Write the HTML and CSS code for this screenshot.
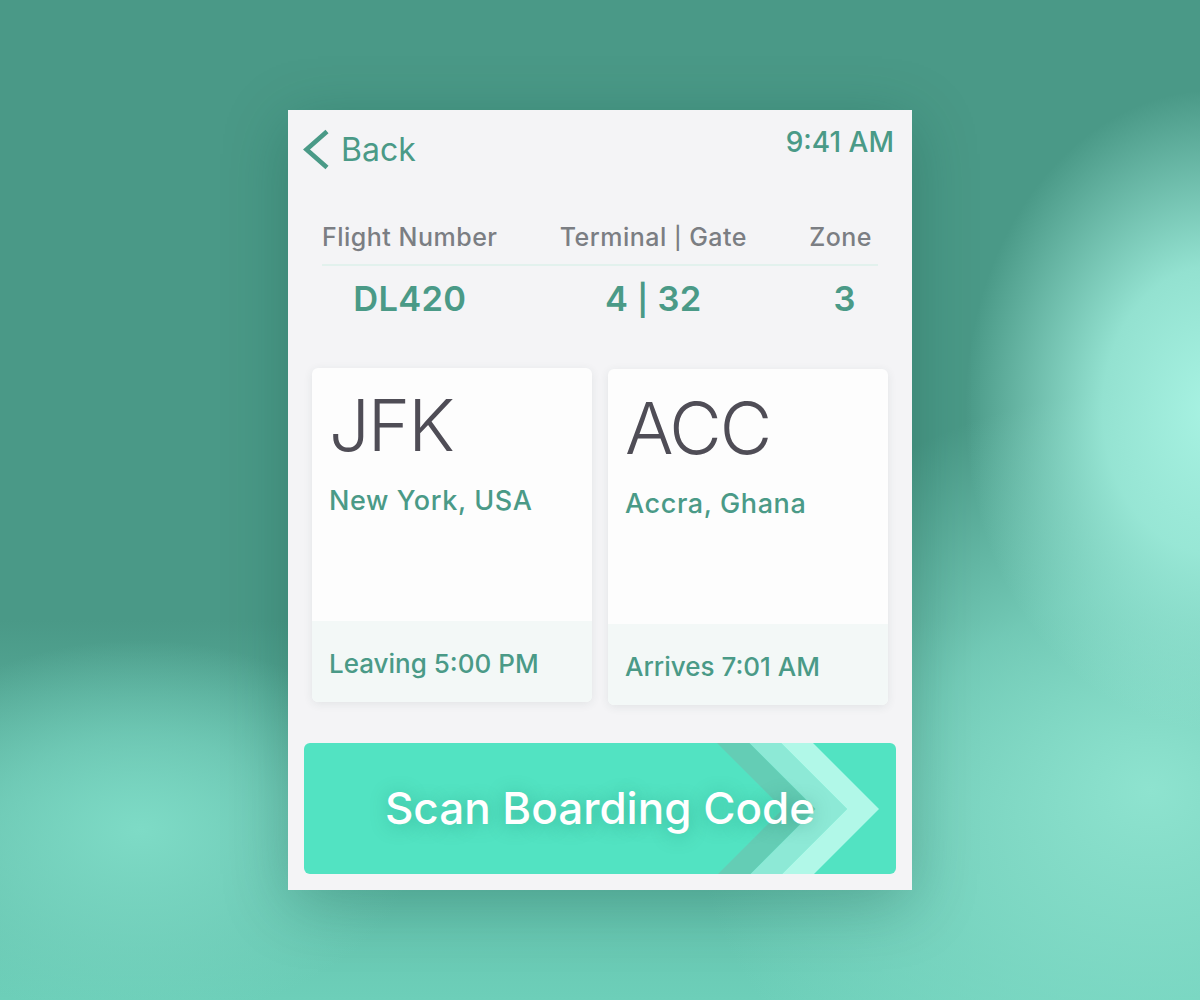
FILE: index.html
```html
<!DOCTYPE html>
<html lang="en">
<head>
<meta charset="utf-8">
<title>Boarding Pass</title>
<link rel="stylesheet" href="styles.css">
</head>
<body>
  <main class="screen">
    <header class="topbar">
      <a class="back" href="#">
        <svg class="back__icon" width="28" height="44" viewBox="0 0 28 44" aria-hidden="true">
          <path d="M24 3.5 L3.5 21.5 L24 39.5" fill="none" stroke="#4a9a87" stroke-width="4.6"/>
        </svg>
        <span class="back__label">Back</span>
      </a>
      <span class="clock">9:41 AM</span>
    </header>

    <section class="flight">
      <div class="flight__col">
        <span class="flight__label">Flight Number</span>
        <span class="flight__value">DL420</span>
      </div>
      <div class="flight__col">
        <span class="flight__label">Terminal <span class="sep">|</span> Gate</span>
        <span class="flight__value">4 <span class="sep">|</span> 32</span>
      </div>
      <div class="flight__col flight__col--zone">
        <span class="flight__label">Zone</span>
        <span class="flight__value">3</span>
      </div>
    </section>

    <section class="route">
      <article class="card">
        <div class="card__main">
          <div class="card__code">JFK</div>
          <div class="card__city">New York, USA</div>
        </div>
        <div class="card__foot">Leaving 5:00 PM</div>
      </article>
      <article class="card card--alt">
        <div class="card__main">
          <div class="card__code">ACC</div>
          <div class="card__city">Accra, Ghana</div>
        </div>
        <div class="card__foot">Arrives 7:01 AM</div>
      </article>
    </section>

    <button class="scan" type="button">
      <svg class="scan__arrows" width="200" height="132" viewBox="0 0 200 132" aria-hidden="true">
        <polygon points="21,0 53.5,0 119.5,66 53.5,132 21,132 87,66" fill="#64cdb5"/>
        <polygon points="53.5,0 85,0 151,66 85,132 53.5,132 119.5,66" fill="#8de9d6"/>
        <polygon points="85,0 117,0 183,66 117,132 85,132 151,66" fill="#b1f8e8"/>
      </svg>
      <span class="scan__label">Scan Boarding Code</span>
    </button>
  </main>
</body>
</html>
```

FILE: styles.css
```css
* {
  box-sizing: border-box;
}

html, body {
  margin: 0;
  padding: 0;
}

body {
  width: 1200px;
  height: 1000px;
  display: flex;
  align-items: center;
  justify-content: center;
  font-family: Inter, Roboto, "Liberation Sans", sans-serif;
  overflow: hidden;
  background:
    radial-gradient(ellipse 250px 320px at 1215px 410px, rgba(168, 243, 227, 1) 0%, rgba(160, 238, 221, 0.85) 45%, rgba(160, 238, 221, 0) 100%),
    radial-gradient(ellipse 460px 400px at 1150px 790px, rgba(142, 227, 207, 1) 0%, rgba(130, 220, 200, 0.7) 50%, rgba(130, 220, 200, 0) 100%),
    radial-gradient(ellipse 280px 190px at 140px 830px, rgba(126, 219, 198, 1) 0%, rgba(124, 216, 196, 0.6) 50%, rgba(124, 216, 196, 0) 100%),
    linear-gradient(180deg, #4a9987 0%, #4a9987 62%, #60b9a5 80%, #6dcfb9 100%);
}

.screen {
  width: 624px;
  height: 780px;
  background: #f4f4f6;
  display: flex;
  flex-direction: column;
  box-shadow: 0 14px 60px rgba(10, 70, 55, 0.28);
}

/* top bar */
.topbar {
  height: 76px;
  padding: 18px 18px 0 15px;
  display: flex;
  align-items: flex-start;
  justify-content: space-between;
}

.back {
  display: flex;
  align-items: center;
  text-decoration: none;
  color: #4a9a87;
}

.back__icon {
  display: block;
  margin-right: 10px;
}

.back__label {
  font-size: 32px;
  line-height: 40px;
  font-weight: 400;
}

.clock {
  margin-top: -3px;
  font-size: 28px;
  line-height: 34px;
  font-weight: 500;
  color: #4a9a87;
}

/* flight info */
.flight {
  margin: 36px 34px 0;
  display: grid;
  grid-template-columns: auto auto auto;
  justify-content: space-between;
  padding-right: 6px;
  background: linear-gradient(#e2f1ed, #e2f1ed) no-repeat 0 42px / calc(100% + 6px) 2px;
}

.flight__col {
  display: flex;
  flex-direction: column;
  align-items: center;
}

.flight__label {
  font-size: 25px;
  line-height: 30px;
  font-weight: 500;
  letter-spacing: 0.5px;
  color: #7b7e83;
}

.flight__value {
  margin-top: 26px;
  font-size: 34.5px;
  line-height: 42px;
  font-weight: 600;
  letter-spacing: 0.3px;
  color: #4a9a87;
}

.sep {
  font-size: 88%;
  line-height: 0;
}

.flight__col--zone .flight__value {
  margin-left: 8px;
}

/* route cards */
.route {
  margin: 48px 24px 0;
  display: grid;
  grid-template-columns: 1fr 1fr;
  gap: 16px;
  align-items: start;
}

.card {
  height: 334px;
  border-radius: 6px;
  overflow: hidden;
  background: #fdfdfd;
  box-shadow: 0 2px 10px rgba(40, 70, 70, 0.09);
  display: flex;
  flex-direction: column;
}

.card--alt {
  margin-top: 1px;
  height: 336px;
}

.card__main {
  flex: 1;
  padding: 14px 17px 0;
}

.card--alt .card__main {
  padding-top: 16px;
}

.card__code {
  font-size: 72px;
  line-height: 86px;
  font-weight: 300;
  letter-spacing: -2px;
  color: #4f4d56;
}

.card__city {
  margin-top: 16px;
  font-size: 27px;
  line-height: 33px;
  font-weight: 500;
  letter-spacing: 0.6px;
  color: #4a9a87;
}

.card__foot {
  height: 81px;
  padding: 27px 17px 0;
  background: #f3f8f7;
  font-size: 26px;
  line-height: 32px;
  font-weight: 500;
  color: #4a9a87;
}

/* scan button */
.scan {
  position: relative;
  margin: 38px 16px 16px;
  height: 132px;
  border: 0;
  border-radius: 6px;
  overflow: hidden;
  background: #52e3c2;
  display: flex;
  align-items: center;
  justify-content: center;
  padding: 0;
  font-family: inherit;
  cursor: pointer;
}

.scan__arrows {
  position: absolute;
  top: 0;
  right: 0;
  display: block;
}

.scan__label {
  position: relative;
  font-size: 44px;
  font-weight: 500;
  color: #ffffff;
  text-shadow: 0 2px 18px rgba(10, 100, 80, 0.35);
}
```
